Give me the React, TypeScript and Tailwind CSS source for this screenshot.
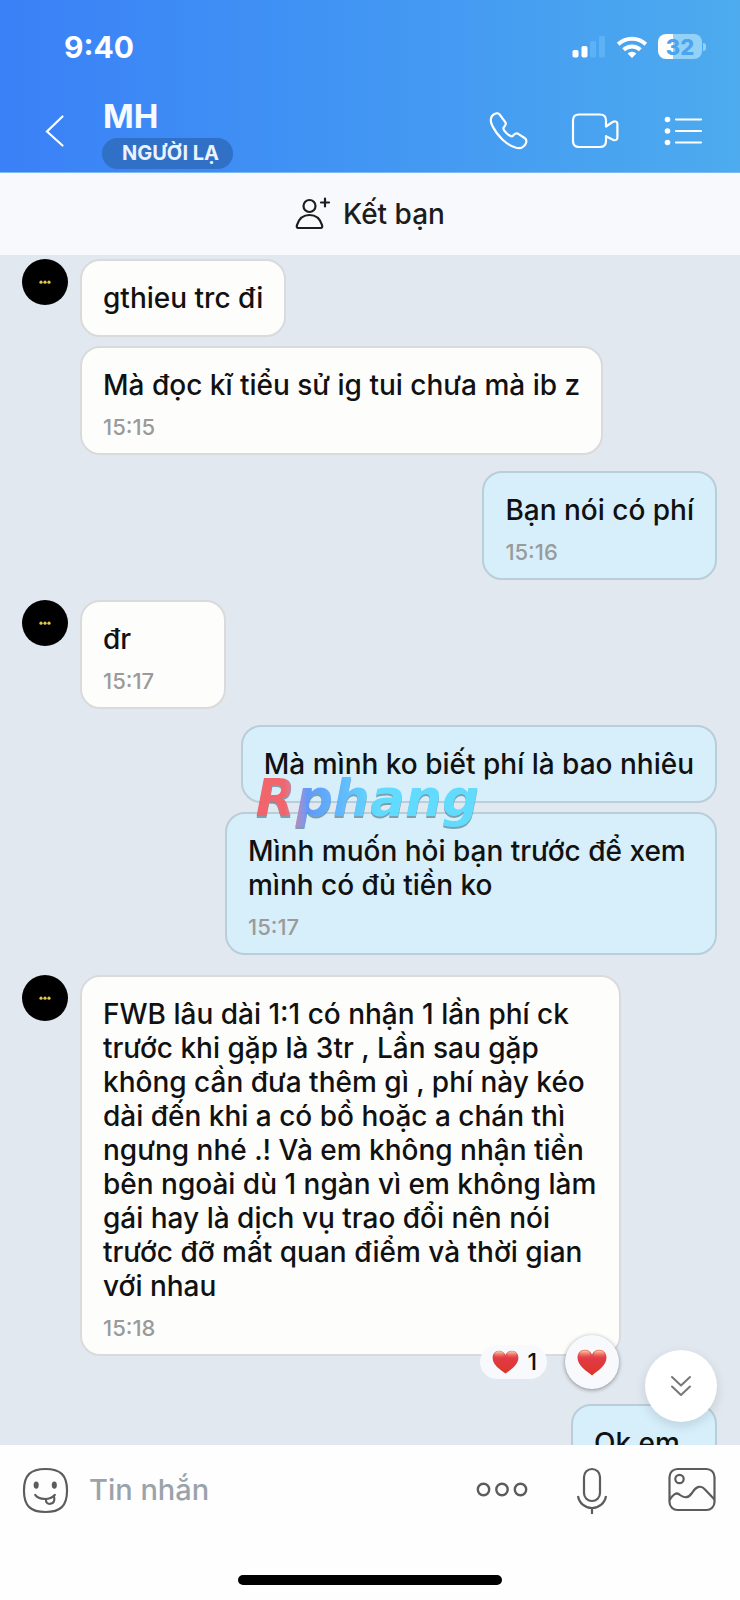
import React, { useState } from 'react';

type Message = {
  id: number;
  mine?: boolean;
  avatar?: boolean;
  text: string;
  time?: string;
  liked?: boolean;
  gap: string;
};

const messages: Message[] = [
  { id: 1, avatar: true, text: 'gthieu trc đi', gap: 'mt-1' },
  { id: 2, text: 'Mà đọc kĩ tiểu sử ig tui chưa mà ib z', time: '15:15', gap: 'mt-[9px]' },
  { id: 3, mine: true, text: 'Bạn nói có phí', time: '15:16', gap: 'mt-4' },
  { id: 4, avatar: true, text: 'đr', time: '15:17', gap: 'mt-5' },
  { id: 5, mine: true, text: 'Mà mình ko biết phí là bao nhiêu', gap: 'mt-4' },
  { id: 6, mine: true, text: 'Mình muốn hỏi bạn trước để xem mình có đủ tiền ko', time: '15:17', gap: 'mt-[9px]' },
  {
    id: 7,
    avatar: true,
    text: 'FWB lâu dài 1:1 có nhận 1 lần phí ck trước khi gặp là 3tr , Lần sau gặp không cần đưa thêm gì , phí này kéo dài đến khi a có bồ hoặc a chán thì ngưng nhé .! Và em không nhận tiền bên ngoài dù 1 ngàn vì em không làm gái hay là dịch vụ trao đổi nên nói trước đỡ mất quan điểm và thời gian với nhau',
    time: '15:18',
    liked: true,
    gap: 'mt-5',
  },
  { id: 8, mine: true, text: 'Ok em', time: '15:18', gap: 'mt-12' },
];

function Heart({ className }: { className: string }) {
  return (
    <svg viewBox="0 0 30 27" className={className} aria-hidden="true">
      <defs>
        <linearGradient id="heart-body" x1="0" y1="0" x2="0" y2="1">
          <stop offset="0" stopColor="#e8685c" />
          <stop offset="0.35" stopColor="#e23a45" />
          <stop offset="1" stopColor="#dd3527" />
        </linearGradient>
        <linearGradient id="heart-shine" x1="0" y1="0" x2="0" y2="1">
          <stop offset="0" stopColor="#fbd9a8" />
          <stop offset="1" stopColor="#e84a50" stopOpacity="0" />
        </linearGradient>
      </defs>
      <path
        fill="url(#heart-body)"
        d="M15 26.5C10 22.5 0.5 17 0.5 8.6C0.5 4 3.6 0.8 7.8 0.8C11 0.8 13.8 2.6 15 5.6C16.2 2.6 19 0.8 22.2 0.8C26.4 0.8 29.5 4 29.5 8.6C29.5 17 20 22.5 15 26.5Z"
      />
      <ellipse cx="7.8" cy="5.4" rx="5.4" ry="4" fill="url(#heart-shine)" />
      <ellipse cx="22.2" cy="5.4" rx="5.4" ry="4" fill="url(#heart-shine)" />
    </svg>
  );
}

function Avatar() {
  return (
    <svg viewBox="0 0 46 46" className="size-[46px]" role="img" aria-label="MH">
      <circle cx="23" cy="23" r="23" fill="#000" />
      <g fill="#e5c84a">
        <circle cx="19" cy="23.2" r="1.6" />
        <circle cx="23" cy="23.2" r="1.6" />
        <circle cx="27" cy="23.2" r="1.6" />
      </g>
    </svg>
  );
}

function StatusBar() {
  return (
    <div className="flex h-[97px] items-center justify-between pr-[34px] pb-1 pl-16">
      <span className="text-[30px] leading-9 font-bold">9:40</span>
      <div className="flex items-center gap-[10px]">
        <svg viewBox="0 0 34 24" className="h-6 w-[34px]" fill="#fff" aria-hidden="true">
          <rect x="0.5" y="15" width="6" height="7.5" rx="1.8" />
          <rect x="9.5" y="11" width="6" height="11.5" rx="1.8" />
          <rect x="18" y="6" width="6" height="16.5" rx="1.8" fill="#5cb2f5" />
          <rect x="27" y="1" width="6" height="21.5" rx="1.8" fill="#5cb2f5" />
        </svg>
        <svg viewBox="0 0 32 24" className="h-6 w-8" fill="none" stroke="#fff" strokeWidth="4" aria-hidden="true">
          <path d="M2.2 9.2A20 20 0 0 1 29.8 9.2" />
          <path d="M7.6 14.8A12.2 12.2 0 0 1 24.4 14.8" />
          <path d="M16 23L11.6 18.6A6.3 6.3 0 0 1 20.4 18.6Z" fill="#fff" stroke="none" />
        </svg>
        <div className="flex items-center gap-[1px]">
          <span className="flex h-[25px] w-11 items-center justify-center rounded-lg bg-linear-to-r from-white from-[33%] to-[#94d1f7] to-[33%] text-[22px] leading-6 font-extrabold text-[#4ba4ee]">
            32
          </span>
          <span className="h-2 w-[3px] rounded-r-full bg-[#94d1f7]" />
        </div>
      </div>
    </div>
  );
}

function Header() {
  return (
    <header className="shrink-0 border-b border-[#7db9f5] bg-linear-to-r from-[#3a80f7] via-[#4296f3] to-[#4dabee] text-white">
      <StatusBar />
      <div className="flex items-center justify-between pr-9 pl-[42px]">
        <div className="flex items-center">
          <button type="button" aria-label="Quay lại" className="mr-9 pb-2">
            <svg viewBox="0 0 24 36" className="h-9 w-6" fill="none" stroke="currentColor" strokeWidth="2.2" strokeLinecap="round">
              <path d="M20.5 3.5L5 18.5L20.5 32.5" />
            </svg>
          </button>
          <div className="pb-[3px]">
            <h1 className="pl-px text-[33px] leading-[39px] font-bold text-[#f5faff]">MH</h1>
            <p className="mt-[2px] rounded-full bg-[#3070c6] pr-[14px] pl-5 text-[20px] leading-[31px] font-bold text-[#eaf3fd]">NGƯỜI LẠ</p>
          </div>
        </div>
        <div className="flex items-center gap-[42px] pb-2">
          <button type="button" aria-label="Gọi thoại">
            <svg viewBox="0 0 40 40" className="size-10" fill="none" stroke="currentColor" strokeWidth="2.2" strokeLinejoin="round">
              <path d="M4 5C6.5 1.8 10.3 1.3 12 4L17.6 11.6C18.6 13.6 16.8 15 15.4 16.6C14.8 19.4 21.4 26 24.4 25.2C26 23.4 27.6 21.6 29.8 22.6L36.6 27C39.4 28.8 38.6 32.4 36.4 34.6C34 37.4 31.6 37.8 28 36.8C19 34.2 9.4 25.4 4.2 14.6C2.2 10.4 2.2 7.6 4 5Z" />
            </svg>
          </button>
          <button type="button" aria-label="Gọi video">
            <svg viewBox="0 0 50 40" className="h-10 w-[50px]" fill="none" stroke="currentColor" strokeWidth="2.2" strokeLinejoin="round">
              <path d="M36 13.5V9.5C36 5.5 33.5 3.5 30 3.5H9C5 3.5 3 6 3 9.5V30C3 34 5 36 9 36H30C33.5 36 36 34 36 30V25.2L43.4 28.9C45.6 29.8 47.4 28.8 47.4 26.6V13C47.4 10.7 45.4 9.7 43.2 10.7L36 15.5Z" />
            </svg>
          </button>
          <button type="button" aria-label="Tùy chọn">
            <svg viewBox="0 0 42 40" className="h-10 w-[42px]" fill="none" stroke="currentColor" strokeWidth="2.2" strokeLinecap="round">
              <path d="M14 8.5H39M14 20H39M14 31.5H39" />
              <g fill="currentColor" stroke="none">
                <circle cx="5.5" cy="8.5" r="2.8" />
                <circle cx="5.5" cy="20" r="2.8" />
                <circle cx="5.5" cy="31.5" r="2.8" />
              </g>
            </svg>
          </button>
        </div>
      </div>
    </header>
  );
}

function Bubble({ message }: { message: Message }) {
  const { mine, text, time, liked } = message;
  return (
    <div
      className={`relative min-w-[146px] rounded-[20px] border-2 px-[21px] pt-5 text-[#111] ${
        mine ? 'max-w-[492px] border-[#b9ced8] bg-[#d6effb]' : 'max-w-[541px] border-[#dadadb] bg-[#fdfdfc]'
      } ${time ? 'pb-[14px]' : 'pb-5'}`}
    >
      <p className="text-[28px] leading-[34px] font-[550]">{text}</p>
      {time && <time className="mt-[13px] block text-[22px] leading-6 font-medium text-[#9a9a9a]">{time}</time>}
      {liked && (
        <div className="absolute right-0 -bottom-[35px] flex items-center gap-[18px]">
          <span className="flex h-[34px] items-center gap-2 rounded-full bg-[#f7f9fd] pr-[10px] pl-3 text-[23px] leading-7 font-medium">
            <Heart className="h-6 w-[27px]" />1
          </span>
          <button type="button" aria-label="Thích" className="flex size-[54px] items-center justify-center rounded-full bg-[#f7f9fd] shadow-[0_1px_4px_rgba(0,0,0,0.4)]">
            <Heart className="h-[27px] w-[30px]" />
          </button>
        </div>
      )}
    </div>
  );
}

export default function ChatPage() {
  const [draft, setDraft] = useState('');

  return (
    <div className="flex h-screen flex-col overflow-hidden bg-[#e1e8f0] font-['Inter','Noto_Sans',sans-serif]">
      <Header />

      {/* Add friend */}
      <button type="button" className="flex h-[82px] shrink-0 items-center justify-center gap-3 bg-[#f8f9fd] text-[28px] leading-8 font-[550] text-[#1c1c1c]">
        <svg viewBox="0 0 36 34" className="h-[34px] w-9" fill="none" stroke="currentColor" strokeWidth="2.2" strokeLinecap="round" strokeLinejoin="round" aria-hidden="true">
          <circle cx="14.5" cy="9" r="6" />
          <path d="M3 31C1.6 31 1.6 29.5 2 28C4 21.5 9 18 14.5 18C20 18 25 21.5 27 28C27.4 29.5 27.4 31 26 31Z" />
          <path d="M30 1.5V9.5M26 5.5H34" />
        </svg>
        Kết bạn
      </button>

      {/* Messages */}
      <main className="relative min-h-0 flex-1">
        <div className="h-full overflow-y-auto pr-[23px] pl-[22px] [scrollbar-width:none]">
          {messages.map((message) => (
            <div key={message.id} className={`flex items-start gap-3 ${message.gap} ${message.mine ? 'justify-end' : ''}`}>
              {!message.mine && <div className="w-[46px] shrink-0">{message.avatar && <Avatar />}</div>}
              <Bubble message={message} />
            </div>
          ))}
        </div>

        {/* Watermark */}
        <div className="pointer-events-none absolute top-[509px] left-[34%] bg-linear-to-r from-[#f35f66] from-[14%] via-[#5b95fb] via-[24%] to-[#5cdcff] to-[55%] bg-clip-text px-1 font-['DejaVu_Sans'] text-[52px] leading-[68px] font-bold text-transparent italic opacity-95 drop-shadow-[0_2px_0_rgba(80,120,140,0.7)]">
          Rphang
        </div>

        <button type="button" aria-label="Xuống cuối" className="absolute right-[23px] bottom-[23px] flex size-[72px] items-center justify-center rounded-full bg-white text-[#777] shadow-[0_4px_12px_rgba(0,0,0,0.12)]">
          <svg viewBox="0 0 22 22" className="size-[22px]" fill="none" stroke="currentColor" strokeWidth="2" strokeLinecap="round" strokeLinejoin="round">
            <path d="M2 2L11 10.5L20 2M2 11.5L11 20L20 11.5" />
          </svg>
        </button>
      </main>

      {/* Composer */}
      <footer className="shrink-0 bg-[#fefefe] text-[#5c5c5c]">
        <div className="flex h-[90px] items-center pr-6 pl-[22px]">
          <button type="button" aria-label="Biểu cảm">
            <svg viewBox="0 0 48 48" className="size-[47px]" fill="none" stroke="currentColor" strokeWidth="2.2" strokeLinecap="round">
              <path d="M24 2C39 2 46 8 46 24C46 40 39 46 24 46C9 46 2 40 2 24C2 8 9 2 24 2Z" />
              <g fill="currentColor" stroke="none">
                <ellipse cx="14.5" cy="18.5" rx="2.6" ry="3.8" />
                <ellipse cx="33" cy="18.5" rx="2.6" ry="3.8" />
              </g>
              <path d="M13.5 28.5C17 33.5 28 34.5 33.5 28.5" />
              <path d="M24.5 33C24 36.500 26.5 38 29 37.5C32.5 37 34 34.5 32.5 29.5" />
            </svg>
          </button>
          <input
            type="text"
            aria-label="Tin nhắn"
            placeholder="Tin nhắn"
            value={draft}
            onChange={(e) => setDraft(e.target.value)}
            className="mx-5 min-w-0 flex-1 bg-transparent text-[29px] leading-9 font-[550] text-[#111] outline-none placeholder:text-[#9ba3aa] placeholder:opacity-100"
          />
          <div className="flex items-center">
            <button type="button" aria-label="Thêm" className="mr-12">
              <svg viewBox="0 0 52 48" className="h-12 w-[52px]" fill="none" stroke="currentColor" strokeWidth="2.4">
                <circle cx="7.5" cy="23.5" r="5.7" />
                <circle cx="26" cy="23.5" r="5.7" />
                <circle cx="44.5" cy="23.5" r="5.7" />
              </svg>
            </button>
            <button type="button" aria-label="Ghi âm" className="mr-[60px]">
              <svg viewBox="0 0 32 48" className="h-12 w-8" fill="none" stroke="currentColor" strokeWidth="2.2">
                <rect x="8" y="3" width="16" height="32" rx="8" />
                <path d="M2 30C3 37 9 42 16 42C23 42 29 37 30 30M16 42V48" />
              </svg>
            </button>
            <button type="button" aria-label="Hình ảnh">
              <svg viewBox="0 0 48 48" className="size-12" fill="none" stroke="currentColor" strokeWidth="2.2">
                <rect x="1.5" y="3" width="45" height="41" rx="8" />
                <circle cx="11.5" cy="13" r="4.2" />
                <path d="M1.5 34C5 28.5 8.5 25.5 12 29C16.5 32.5 20.5 32 24 27C28.5 20 33 19 37 23.5L46.5 33.5" />
              </svg>
            </button>
          </div>
        </div>
        <div className="pt-10 pb-[15px]">
          <div className="mx-auto h-[10px] w-[264px] rounded-full bg-black" />
        </div>
      </footer>
    </div>
  );
}
